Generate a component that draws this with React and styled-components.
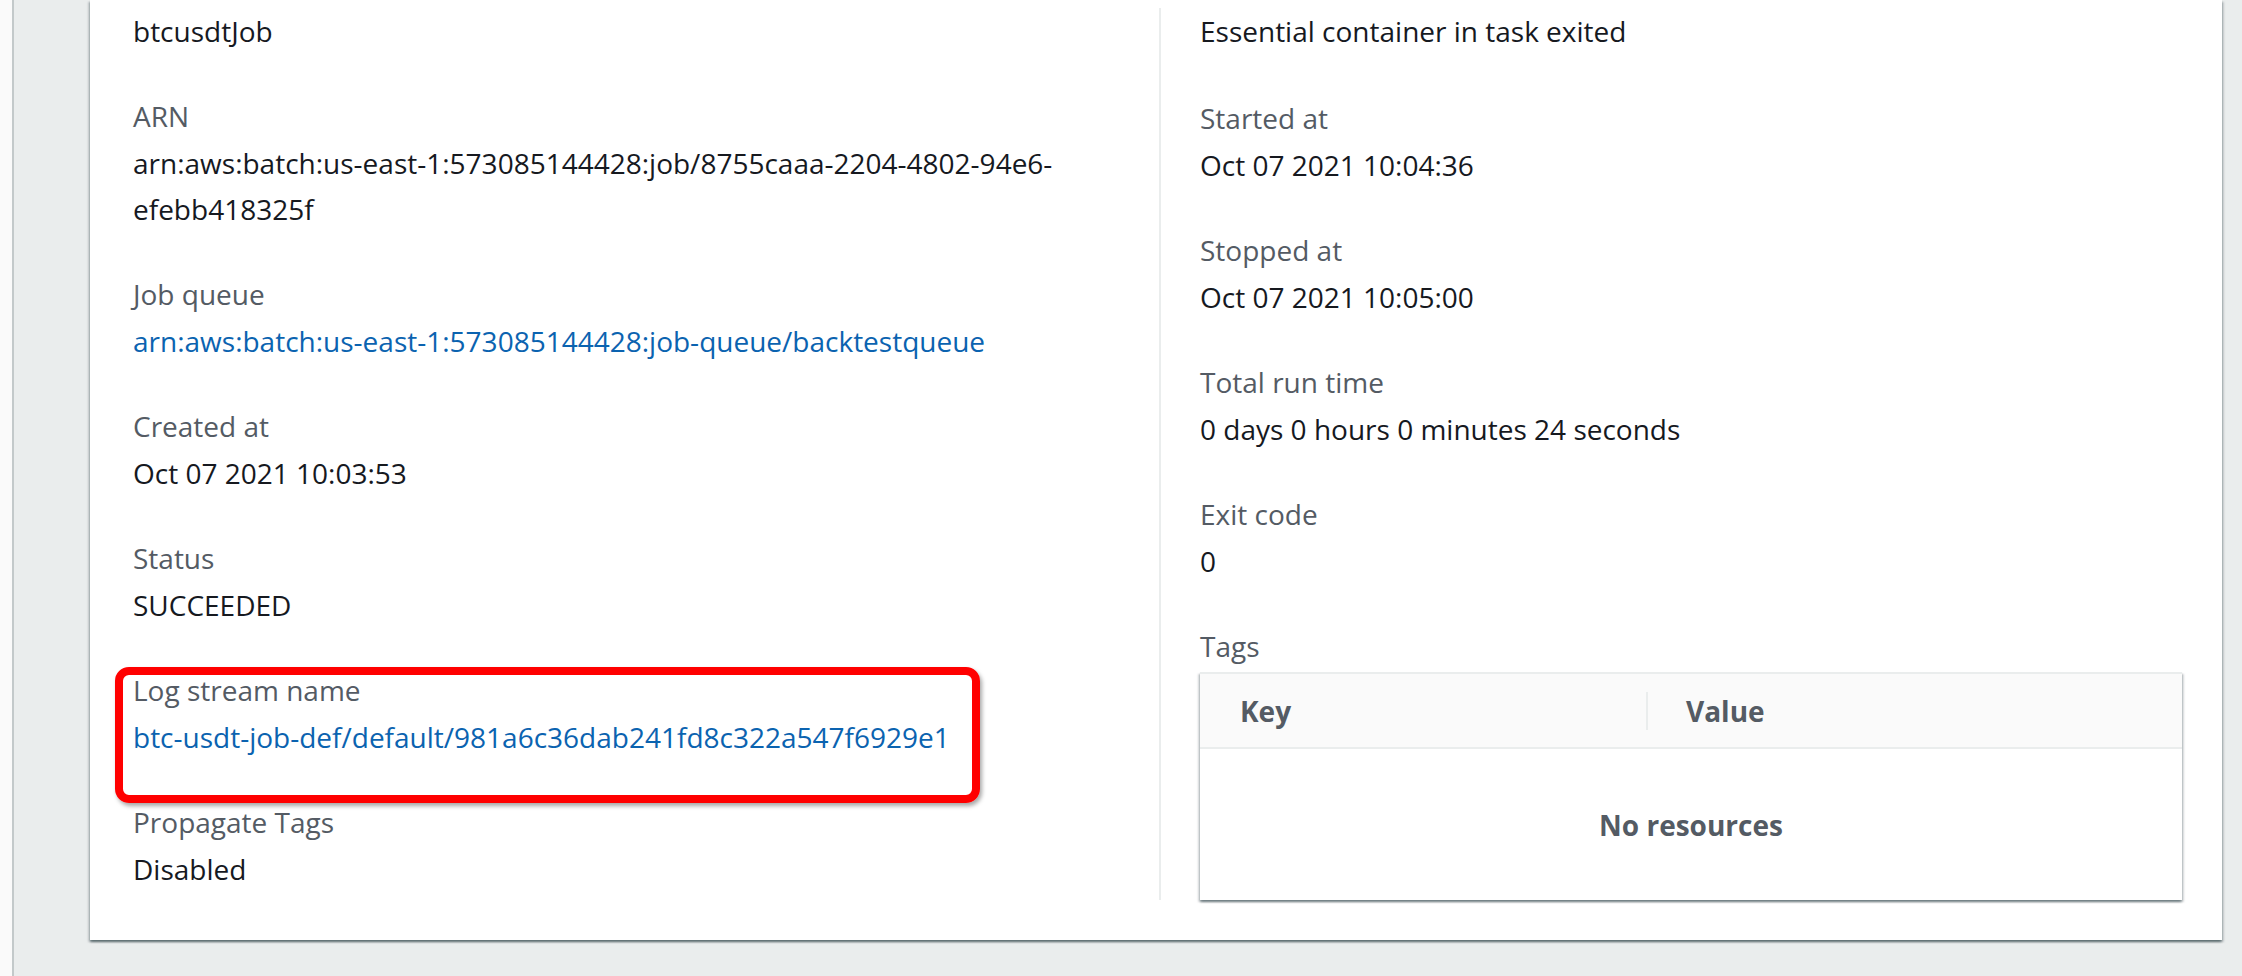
import React from "react";
import styled, { createGlobalStyle } from "styled-components";

const GlobalStyle = createGlobalStyle`
  html, body {
    margin: 0;
    padding: 0;
    background: #eaeded;
    overflow: hidden;
  }
  body {
    font-family: "Open Sans", "Liberation Sans", Arial, sans-serif;
    font-size: 28px;
    line-height: 46px;
    color: #16191f;
  }
`;

const Page = styled.div`
  display: flex;
  height: 976px;
`;

const SideEdge = styled.div`
  width: 12px;
  flex: none;
  background: #fafafa;
  border-right: 2px solid #c3c9ca;
`;

const Main = styled.main`
  flex: 1;
  padding: 0 20px 36px 76px;
  display: flex;
  flex-direction: column;
`;

const Card = styled.section`
  flex: 1;
  background: #fff;
  box-shadow: 0 2px 2px 0 rgba(0, 28, 36, 0.45), 2px 2px 2px 0 rgba(0, 28, 36, 0.15),
    -2px 2px 2px 0 rgba(0, 28, 36, 0.15);
  padding: 8px 40px 40px 43px;
  display: grid;
  grid-template-columns: 1026px 1fr;
`;

const Column = styled.div`
  display: flex;
  flex-direction: column;
  gap: 39px;
  padding-right: ${(p) => (p.$right ? "0" : "40px")};
  padding-left: ${(p) => (p.$right ? "39px" : "0")};
  border-left: ${(p) => (p.$right ? "2px solid #eaeded" : "none")};
`;

const Item = styled.div`
  position: relative;
`;

const FirstItem = styled(Item)`
  margin-bottom: ${(p) => (p.$right ? "2px" : "0")};
`;

const Label = styled.div`
  color: #545b64;
`;

const Value = styled.div`
  margin-top: ${(p) => (p.$first ? "0" : "1px")};
  color: #16191f;
  overflow-wrap: anywhere;
`;

const Link = styled.a`
  color: #0b63b0;
  text-decoration: none;
`;

const Highlight = styled.div`
  position: absolute;
  top: 0;
  left: -18px;
  width: 865px;
  height: 136px;
  box-sizing: border-box;
  border: 8px solid #ff0000;
  border-radius: 14px;
  box-shadow: 2px 3px 4px rgba(0, 0, 0, 0.35);
  pointer-events: none;
`;

const TagsLabel = styled(Label)`
  margin-bottom: 3px;
`;

const Table = styled.div`
  background: #fff;
  border-top: 2px solid #eaeded;
  box-shadow: 0 2px 2px 0 rgba(0, 28, 36, 0.4), 2px 2px 2px 0 rgba(0, 28, 36, 0.15),
    -2px 2px 2px 0 rgba(0, 28, 36, 0.15);
`;

const HeadRow = styled.div`
  display: grid;
  grid-template-columns: 446px 2px 1fr;
  align-items: center;
  height: 73px;
  background: #fafafa;
  border-bottom: 2px solid #eaeded;
`;

const HeadCell = styled.div`
  padding-left: ${(p) => p.$pad}px;
  font-weight: 700;
  color: #545b64;
`;

const HeadSep = styled.div`
  width: 2px;
  height: 38px;
  background: #eaeded;
`;

const Empty = styled.div`
  height: 151px;
  display: flex;
  align-items: center;
  justify-content: center;
  font-weight: 700;
  color: #545b64;
`;

const leftItems = [
  { label: "ARN", value: "arn:aws:batch:us-east-1:573085144428:job/8755caaa-2204-4802-94e6-efebb418325f" },
  { label: "Job queue", value: "arn:aws:batch:us-east-1:573085144428:job-queue/backtestqueue", link: true },
  { label: "Created at", value: "Oct 07 2021 10:03:53" },
  { label: "Status", value: "SUCCEEDED" },
  { label: "Log stream name", value: "btc-usdt-job-def/default/981a6c36dab241fd8c322a547f6929e1", link: true, marked: true },
  { label: "Propagate Tags", value: "Disabled" },
];

const rightItems = [
  { label: "Started at", value: "Oct 07 2021 10:04:36" },
  { label: "Stopped at", value: "Oct 07 2021 10:05:00" },
  { label: "Total run time", value: "0 days 0 hours 0 minutes 24 seconds" },
  { label: "Exit code", value: "0" },
];

function Detail({ label, value, link, marked }) {
  return (
    <Item>
      <Label>{label}</Label>
      <Value>{link ? <Link href="#">{value}</Link> : value}</Value>
      {marked && <Highlight />}
    </Item>
  );
}

export default function App() {
  return (
    <>
      <GlobalStyle />
      <Page>
        <SideEdge />
        <Main>
          <Card>
            <Column>
              <FirstItem>
                <Value $first>btcusdtJob</Value>
              </FirstItem>
              {leftItems.map((it) => (
                <Detail key={it.label} {...it} />
              ))}
            </Column>
            <Column $right>
              <FirstItem $right>
                <Value $first>Essential container in task exited</Value>
              </FirstItem>
              {rightItems.map((it) => (
                <Detail key={it.label} {...it} />
              ))}
              <Item>
                <TagsLabel>Tags</TagsLabel>
                <Table>
                  <HeadRow>
                    <HeadCell $pad={40}>Key</HeadCell>
                    <HeadSep />
                    <HeadCell $pad={38}>Value</HeadCell>
                  </HeadRow>
                  <Empty>No resources</Empty>
                </Table>
              </Item>
            </Column>
          </Card>
        </Main>
      </Page>
    </>
  );
}
